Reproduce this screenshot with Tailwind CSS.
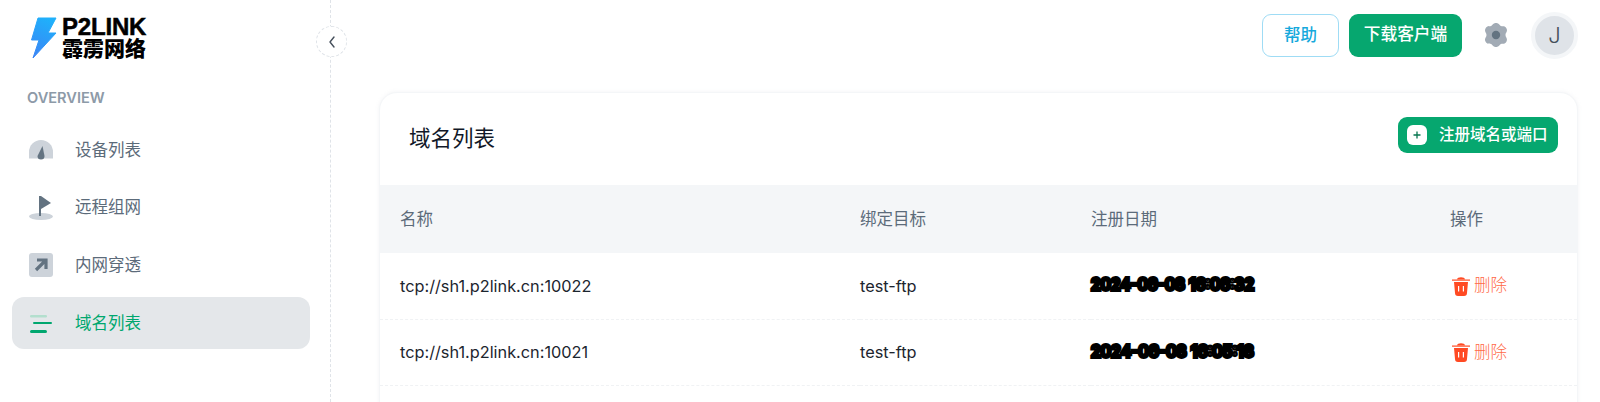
<!DOCTYPE html>
<html lang="zh-CN">
  <head>
    <meta charset="UTF-8" />
    <meta name="viewport" content="width=device-width, initial-scale=1.0" />
    <title>域名列表</title>
    <script src="https://cdn.jsdelivr.net/npm/@tailwindcss/browser@4"></script>
  </head>
  <body class="bg-white h-[402px] overflow-hidden font-['Inter','Noto_Sans_CJK_SC',sans-serif] text-[#111827]">
    <div class="flex h-[402px] overflow-hidden">
      <!-- 侧边栏 -->
      <aside class="relative w-[331px] shrink-0 border-r border-dashed border-[#dfe3e8] pl-3 pr-5">
        <div class="flex items-center gap-[5px] pl-[19px] pt-4 h-[58px]">
          <svg width="26" height="41" viewBox="0 0 26 41">
            <defs>
              <linearGradient id="bolt" x1="0.6" y1="0" x2="0.3" y2="1">
                <stop offset="0" stop-color="#1fb0fb" />
                <stop offset="1" stop-color="#3a86f5" />
              </linearGradient>
            </defs>
            <path d="M7 1 H25 L17 16 H25 L2 41 L8 23 H0.5 Z" fill="url(#bolt)" stroke="url(#bolt)" stroke-linejoin="round" />
          </svg>
          <div class="text-black leading-none w-[84px]">
            <div class="font-['Liberation_Sans'] font-bold text-[24px] h-[19px] leading-[19px] tracking-[-0.2px] [-webkit-text-stroke:0.5px_black]">P2LINK</div>
            <div class="font-['Noto_Sans_CJK_SC'] font-black text-[21px] h-[22px] leading-[22px]">霹雳网络</div>
          </div>
        </div>
        <div class="pl-[15px] mt-[32px] h-[16px] leading-[16px] text-[14.600px] font-semibold text-[#8d9aa8]">OVERVIEW</div>

        <nav class="mt-[18px] flex flex-col gap-[5.500px] text-[16.500px] text-[#5c6b7a]">
          <a class="flex items-center h-[52px] pl-[17px] gap-[22px]">
            <svg width="24" height="20" viewBox="0 0 24 20">
              <path d="M0 18.500 V12 A12 12 0 0 1 24 12 V18.500 Z" fill="#cdd3da" />
              <path d="M13.500 6 L15.500 16 A3.500 3.500 0 1 1 8.500 16 Z" fill="#637381" />
            </svg>
            <span>设备列表</span>
          </a>
          <a class="flex items-center h-[52px] pl-[17px] gap-[22px]">
            <svg width="24" height="26" viewBox="0 0 24 26">
              <ellipse cx="12" cy="21.500" rx="12" ry="3.500" fill="#cdd3da" />
              <path d="M11 1 V21" stroke="#637381" stroke-width="2" />
              <path d="M12 1 L22 8 L12 14 Z" fill="#637381" />
            </svg>
            <span>远程组网</span>
          </a>
          <a class="flex items-center h-[52px] pl-[17px] gap-[22px]">
            <svg width="24" height="24" viewBox="0 0 24 24">
              <rect width="24" height="24" rx="3" fill="#cdd3da" />
              <path d="M8 7 H17 V16 M16.500 7.500 L7 17" fill="none" stroke="#637381" stroke-width="3.200" />
            </svg>
            <span>内网穿透</span>
          </a>
          <a class="flex items-center h-[52px] pl-[18px] pt-[2px] gap-[22px] rounded-[12px] bg-[#e4e7ea] text-[#00a76f]">
            <svg width="23" height="18" viewBox="0 0 23 18">
              <rect x="0" y="0" width="17" height="2.500" rx="1.250" fill="#b3dfce" />
              <rect x="3" y="7" width="19" height="2" rx="1" fill="#00a76f" />
              <rect x="0" y="15" width="17" height="3" rx="1.500" fill="#00a76f" />
            </svg>
            <span>域名列表</span>
          </a>
        </nav>

        <!-- 折叠按钮压在分割线上 -->
        <button class="absolute left-[316px] top-[26px] w-[31px] h-[31px] rounded-full bg-white border border-dashed border-[#dfe3e8] flex items-center justify-center">
          <svg width="8" height="12" viewBox="0 0 8 12" fill="none" stroke="#454f5b" stroke-width="1.400" stroke-linecap="round" stroke-linejoin="round">
            <path d="M6 1 L2 6 L6 11" />
          </svg>
        </button>
      </aside>

      <main class="flex-1 min-w-0 pl-12 pr-[22px]">
        <header class="flex items-center justify-end h-[70px]">
          <button class="w-[77px] h-[43px] rounded-[9px] border border-[#9fdcf5] text-[#16a9dc] text-[16.500px] font-medium">帮助</button>
          <button class="ml-[10px] w-[113px] h-[43px] rounded-[9px] bg-[#06a76f] text-white text-[16.700px] font-medium">下载客户端</button>
          <svg class="ml-[21px]" width="26" height="26" viewBox="0 0 26 26">
            <path d="M13 1 C16 1 16.500 3.500 18 4 C20 4.500 22 3.500 23.500 6.500 C25 9.500 22.500 10.500 22.500 13 C22.500 15.500 25 16.500 23.500 19.500 C22 22.500 20 21.500 18 22 C16.500 22.500 16 25 13 25 C10 25 9.500 22.500 8 22 C6 21.500 4 22.500 2.500 19.500 C1 16.500 3.500 15.500 3.500 13 C3.500 10.500 1 9.500 2.500 6.500 C4 3.500 6 4.500 8 4 C9.500 3.500 10 1 13 1 Z" fill="#a2abb5" />
            <circle cx="13" cy="13" r="4.200" fill="#637381" />
          </svg>
          <div class="ml-[22px] w-[47px] h-[47px] rounded-full border-[4px] border-[#f4f6f8] bg-[#dfe3e8] flex items-center justify-center text-[#454f5b] text-[22px] font-light">J</div>
        </header>

        <section class="mt-[22px] min-h-[400px] rounded-tl-[18px] rounded-tr-[18px] border border-[#f4f6f8] shadow-[0_0_4px_rgba(145,158,171,0.12)] bg-white">
          <div class="flex items-center justify-between h-[92px] pl-[29px] pr-[19px]">
            <h2 class="-mt-[2px] text-[21.500px] font-normal text-[#111827]">域名列表</h2>
            <button class="-mt-[8px] flex items-center h-[36px] w-[160px] pl-[9px] rounded-[9px] bg-[#06a76f] text-white text-[15.500px] font-medium">
              <span class="w-5 h-5 rounded-[6px] bg-white flex items-center justify-center">
                <svg width="8" height="8" viewBox="0 0 8 8" stroke="#06764f" stroke-width="1.300"><path d="M4 0.500 V7.500 M0.500 4 H7.500" /></svg>
              </span>
              <span class="ml-3">注册域名或端口</span>
            </button>
          </div>
          <table class="w-full table-fixed text-left text-[16.300px]">
            <colgroup>
              <col class="w-[480px]" />
              <col class="w-[231px]" />
              <col class="w-[359px]" />
              <col />
            </colgroup>
            <thead class="bg-[#f4f6f8] text-[#5c6b7a] text-[16.500px]">
              <tr class="h-[68px]">
                <th class="pl-5 font-normal">名称</th>
                <th class="font-normal">绑定目标</th>
                <th class="font-normal">注册日期</th>
                <th class="font-normal">操作</th>
              </tr>
            </thead>
            <tbody class="text-[#1c252e]">
              <tr class="h-[66px] border-b border-dashed border-[#f0f2f4]">
                <td class="pl-5">tcp://sh1.p2link.cn:10022</td>
                <td>test-ftp</td>
                <td><span class="relative -top-[1px] text-black text-[15.900px] [-webkit-text-stroke:4px_black]">2024-06-08 16:06:32</span></td>
                <td>
                  <a class="ml-[2px] flex items-center gap-[4px] text-[#ff6a47] text-[16.500px] font-light">
                    <svg width="18" height="20" viewBox="0 0 18 20">
                      <path d="M5 3.500 C5 0.500 13 0.500 13 3.500 Z" fill="#ff4a23" />
                      <rect x="0" y="3.500" width="18" height="1.200" fill="#ff4a23" />
                      <path fill-rule="evenodd" d="M2 6 H16 L15 17 Q15 20 12 20 H6 Q3 20 3 17 Z M6 10 V15.500 H7.200 V10 Z M10.800 10 V15.500 H12 V10 Z" fill="#ff4a23" />
                    </svg>
                    删除
                  </a>
                </td>
              </tr>
              <tr class="h-[66px] border-b border-dashed border-[#f0f2f4]">
                <td class="pl-5">tcp://sh1.p2link.cn:10021</td>
                <td>test-ftp</td>
                <td><span class="relative -top-[1px] text-black text-[16.200px] [-webkit-text-stroke:4px_black]">2024-06-08 16:05:18</span></td>
                <td>
                  <a class="ml-[2px] flex items-center gap-[4px] text-[#ff6a47] text-[16.500px] font-light">
                    <svg width="18" height="20" viewBox="0 0 18 20">
                      <path d="M5 3.500 C5 0.500 13 0.500 13 3.500 Z" fill="#ff4a23" />
                      <rect x="0" y="3.500" width="18" height="1.200" fill="#ff4a23" />
                      <path fill-rule="evenodd" d="M2 6 H16 L15 17 Q15 20 12 20 H6 Q3 20 3 17 Z M6 10 V15.500 H7.200 V10 Z M10.800 10 V15.500 H12 V10 Z" fill="#ff4a23" />
                    </svg>
                    删除
                  </a>
                </td>
              </tr>
            </tbody>
          </table>
        </section>
      </main>
    </div>
  </body>
</html>
